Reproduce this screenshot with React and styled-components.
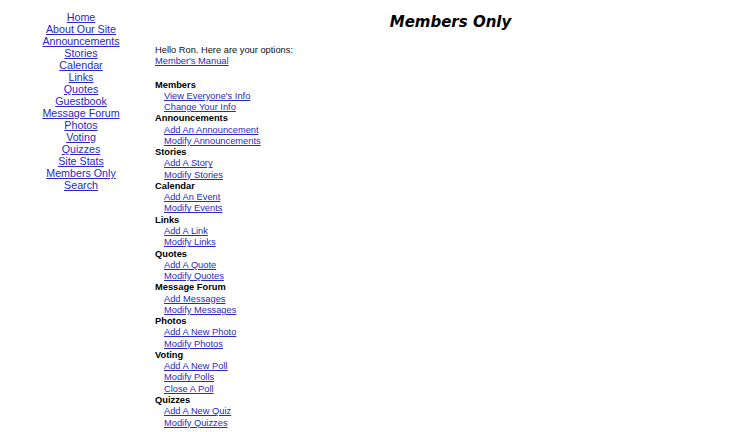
import React from "react";
import styled, { createGlobalStyle } from "styled-components";

const GlobalStyle = createGlobalStyle`
  body {
    margin: 8px;
    background: #ffffff;
    font-family: "Liberation Sans", Arial, sans-serif;
    color: #111111;
  }
  a { color: #2a2ac4; }
`

const Page = styled.div`
  display: flex;
  align-items: flex-start;
`

const SideNav = styled.nav`
  width: 146px;
  flex-shrink: 0;
  display: flex;
  flex-direction: column;
  align-items: center;
  padding-top: 3px;
  font-size: 10.7px;
  line-height: 12px;
`

const NavLink = styled.a`
  text-decoration: underline;
`

const Main = styled.main`
  flex: 1;
  padding-left: 1px;
`

const Title = styled.h1`
  margin: 5px 0 0;
  padding-left: 4px;
  text-align: center;
  font-family: "DejaVu Sans", Verdana, sans-serif;
  font-size: 15px;
  font-weight: bold;
  font-style: italic;
  line-height: 18px;
  color: #000000;
`

const Options = styled.div`
  margin-top: 14px;
  font-size: 9.3px;
  line-height: 11.27px;
`

const Intro = styled.div`
  margin-bottom: 12px;
`

const Heading = styled.div`
  font-weight: bold;
  color: #000000;
`

const SubLink = styled.a`
  display: block;
  width: fit-content;
  margin-left: ${p => p.$indent ?? 9}px;
`

const navItems = [
  "Home", "About Our Site", "Announcements", "Stories", "Calendar", "Links",
  "Quotes", "Guestbook", "Message Forum", "Photos", "Voting", "Quizzes",
  "Site Stats", "Members Only", "Search",
]

const sections = [
  { name: "Members", links: ["View Everyone's Info", "Change Your Info"] },
  { name: "Announcements", links: ["Add An Announcement", "Modify Announcements"] },
  { name: "Stories", links: ["Add A Story", "Modify Stories"] },
  { name: "Calendar", links: ["Add An Event", "Modify Events"] },
  { name: "Links", links: ["Add A Link", "Modify Links"] },
  { name: "Quotes", links: ["Add A Quote", "Modify Quotes"] },
  { name: "Message Forum", links: ["Add Messages", "Modify Messages"] },
  { name: "Photos", links: ["Add A New Photo", "Modify Photos"] },
  { name: "Voting", links: ["Add A New Poll", "Modify Polls", "Close A Poll"] },
  { name: "Quizzes", links: ["Add A New Quiz", "Modify Quizzes"] },
]

export default function App() {
  return (
    <>
      <GlobalStyle />
      <Page>
        <SideNav>
          {navItems.map(item => (
            <NavLink key={item} href="#">{item}</NavLink>
          ))}
        </SideNav>
        <Main>
          <Title>Members Only</Title>
          <Options>
            <Intro>
              Hello Ron. Here are your options:
              <SubLink href="#" $indent={0}>Member's Manual</SubLink>
            </Intro>
            {sections.map(section => (
              <div key={section.name}>
                <Heading>{section.name}</Heading>
                {section.links.map(link => (
                  <SubLink key={link} href="#">{link}</SubLink>
                ))}
              </div>
            ))}
          </Options>
        </Main>
      </Page>
    </>
  )
}
